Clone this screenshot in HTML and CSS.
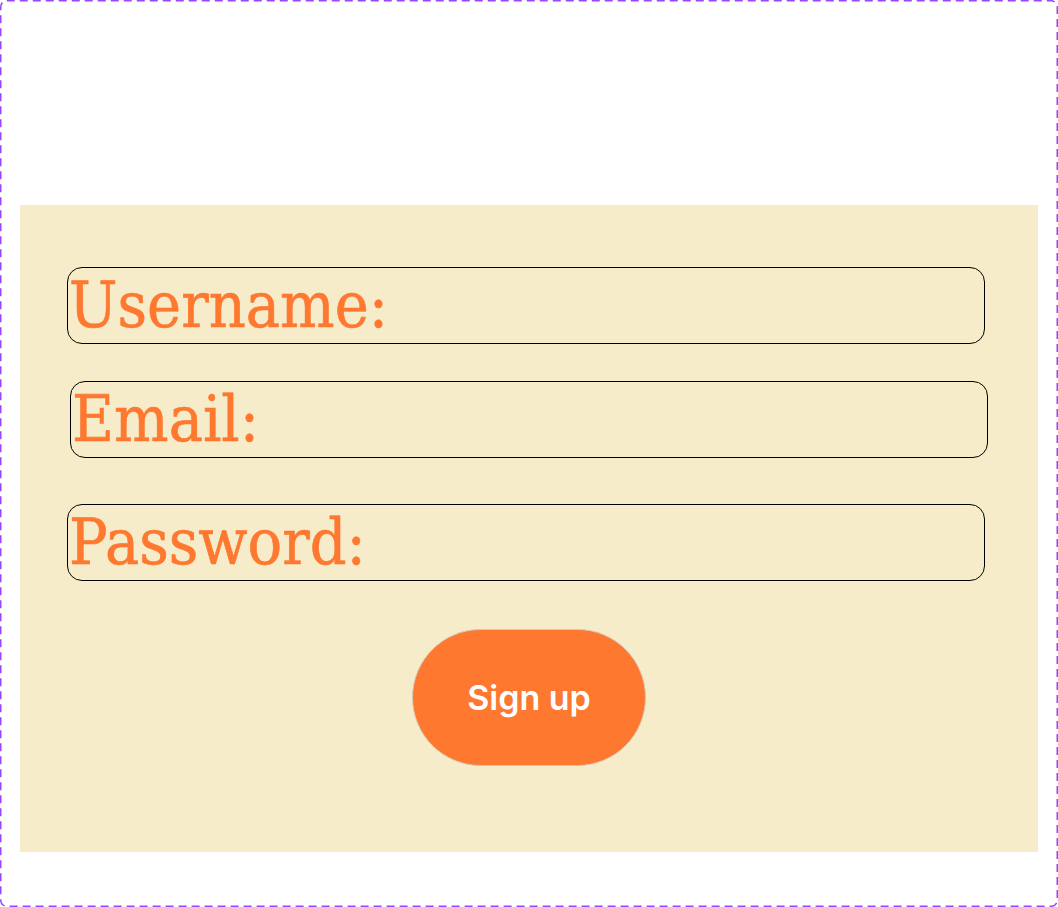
FILE: index.html
```html
<!DOCTYPE html>
<html>
<head>
<meta charset="utf-8">
<link rel="stylesheet" href="styles.css">
</head>
<body>
<div class="frame">
  <svg class="frame-border" width="1058" height="907" viewBox="0 0 1058 907" aria-hidden="true">
    <rect x="0.75" y="0.75" width="1056.5" height="905.5" rx="6" ry="6" fill="none" stroke="#9747ff" stroke-width="1.5" stroke-dasharray="8 5"/>
  </svg>
  <form class="panel">
    <div class="field field-user"><label class="label">Username:</label></div>
    <div class="field field-email"><label class="label">Email:</label></div>
    <div class="field field-pass"><label class="label">Password:</label></div>
    <button type="button" class="btn">Sign up</button>
  </form>
</div>
</body>
</html>
```

FILE: styles.css
```css
* { box-sizing: border-box; }
html, body { margin: 0; padding: 0; background: #ffffff; }
.frame {
  position: relative;
  width: 1058px;
  height: 907px;
  padding: 205px 20px 0 20px;
}
.frame-border {
  position: absolute;
  left: 0;
  top: 0;
  pointer-events: none;
}
.panel {
  margin: 0;
  height: 647px;
  background: #f6ecca;
  padding: 62px 53px 0 47px;
  display: flex;
  flex-direction: column;
}
.field {
  height: 77px;
  border: 1px solid #000;
  border-radius: 15px;
  display: flex;
  align-items: flex-end;
  padding: 0 0 6px 1px;
}
.field-email { margin: 37px -3px 0 3px; }
.field-pass { margin-top: 46px; }
.label {
  font-family: "DejaVu Serif Condensed", "DejaVu Serif", serif;
  font-stretch: condensed;
  font-size: 64px;
  line-height: 1;
  color: #fe7830;
  -webkit-text-stroke: 0.6px #fe7830;
}
.btn {
  align-self: center;
  margin: 48px 0 0 6px;
  width: 234px;
  height: 137px;
  border-radius: 70px;
  border: 1px solid #d9c9b8;
  background: #fe7830;
  color: #ffffff;
  font-family: Inter, "Liberation Sans", sans-serif;
  font-weight: 600;
  font-size: 34px;
  padding: 0;
}
```
